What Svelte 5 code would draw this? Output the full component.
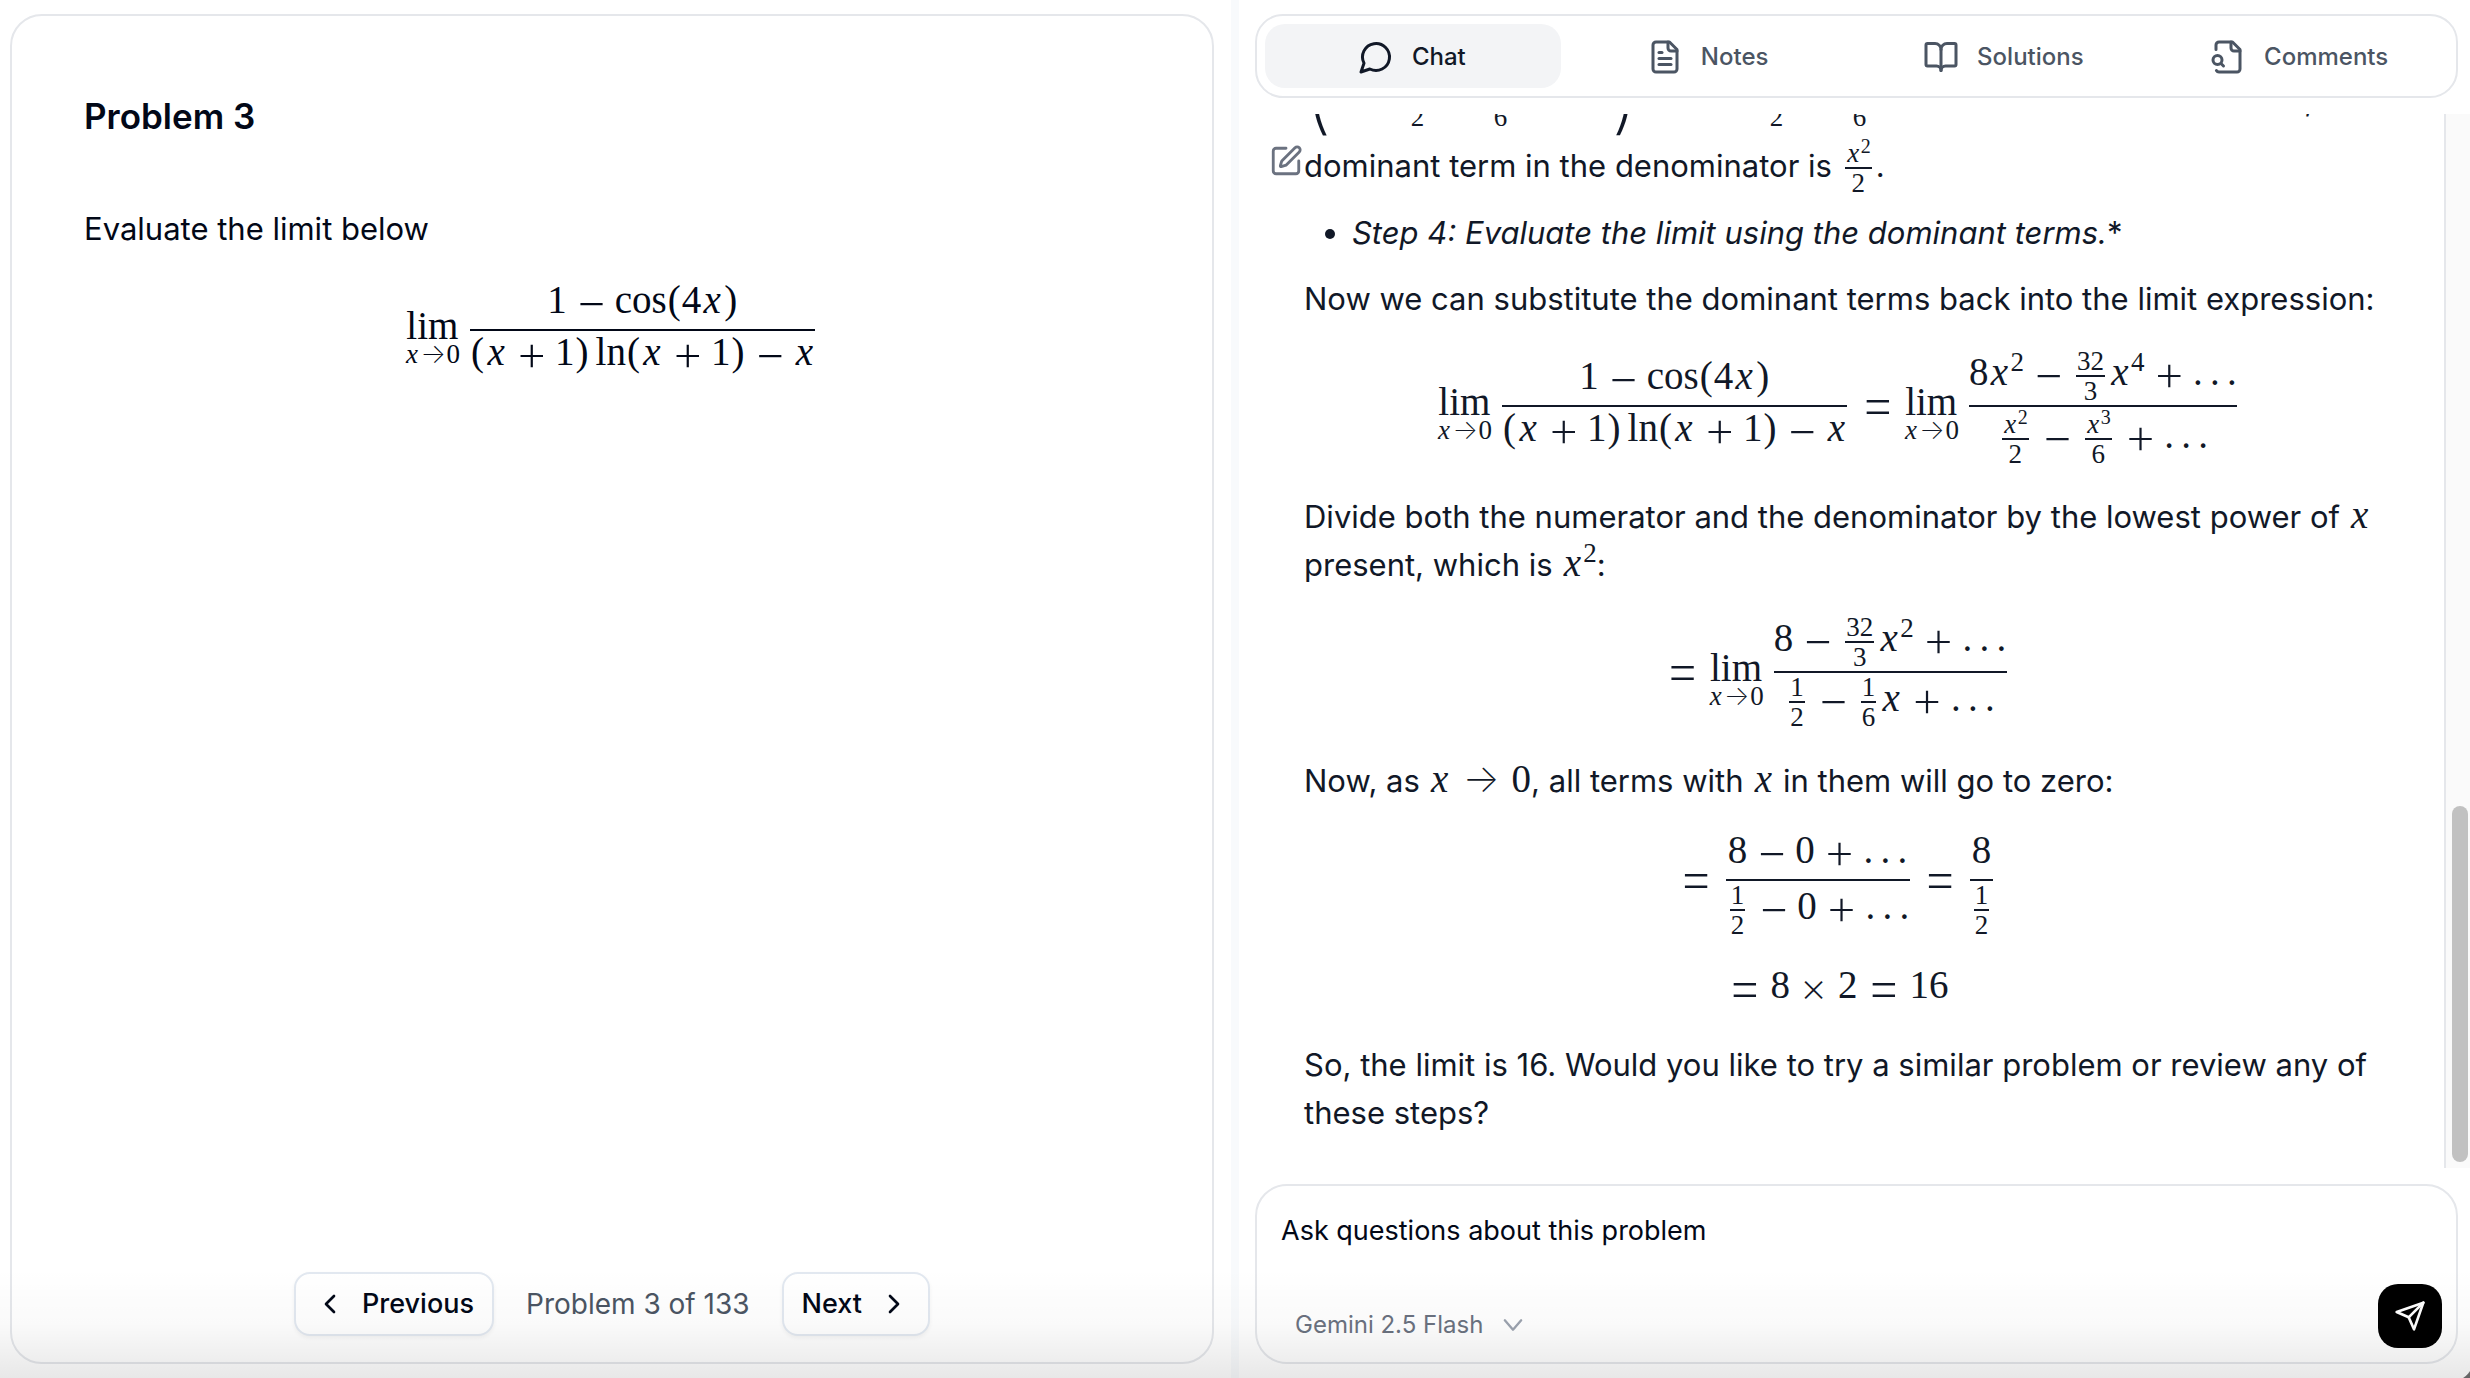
<script>
  const X2 = { exp: '2', base: 'x' };
  const half = { num: ['1'], den: ['2'], small: true };
  const sixth = { num: ['1'], den: ['6'], small: true };
  const thirtyTwoThirds = { num: ['32'], den: ['3'], small: true };
  const x2over2 = { num: [X2], den: ['2'], small: true };
  const x3over6 = { num: [{ base: 'x', exp: '3' }], den: ['6'], small: true };
  const original = {
    num: ['1', '−', 'cos', '(', '4', 'x', ')'],
    den: ['(', 'x', '+', '1', ')', 'thin', 'ln', '(', 'x', '+', '1', ')', '−', 'x'],
  };

  const problem = ['lim', original];
  const expansion = [
    'big(', 'x', '−', x2over2, '+', x3over6, '+', '…', 'big)', '−', 'x', '=',
    x2over2, '−', x3over6, '+', '…',
  ];
  const substituted = [
    'lim', original, '=', 'lim',
    {
      num: ['8', X2, '−', thirtyTwoThirds, { base: 'x', exp: '4' }, '+', '…'],
      den: [x2over2, '−', x3over6, '+', '…'],
      raised: true,
    },
  ];
  const divided = [
    '=', 'lim',
    {
      num: ['8', '−', thirtyTwoThirds, X2, '+', '…'],
      den: [half, '−', sixth, 'x', '+', '…'],
    },
  ];
  const evaluated = [
    '=', { num: ['8', '−', '0', '+', '…'], den: [half, '−', '0', '+', '…'] },
    '=', { num: ['8'], den: [half] },
  ];
  const result = ['=', '8', '×', '2', '=', '16'];

  const tabs = [
    { label: 'Chat', icon: ['M7.9 20A9 9 0 1 0 4 16.1L2 22Z'] },
    {
      label: 'Notes',
      icon: [
        'M15 2H6a2 2 0 0 0-2 2v16a2 2 0 0 0 2 2h12a2 2 0 0 0 2-2V7Z',
        'M14 2v4a2 2 0 0 0 2 2h4', 'M10 9H8', 'M16 13H8', 'M16 17H8',
      ],
    },
    {
      label: 'Solutions',
      icon: [
        'M12 7v14',
        'M3 18a1 1 0 0 1-1-1V4a1 1 0 0 1 1-1h5a4 4 0 0 1 4 4 4 4 0 0 1 4-4h5a1 1 0 0 1 1 1v13a1 1 0 0 1-1 1h-6a3 3 0 0 0-3 3 3 3 0 0 0-3-3z',
      ],
    },
    {
      label: 'Comments',
      icon: [
        'M14 2v4a2 2 0 0 0 2 2h4',
        'M4.268 21a2 2 0 0 0 1.727 1H18a2 2 0 0 0 2-2V7l-5-5H6a2 2 0 0 0-2 2v3',
        'm9 18-1.5-1.5', 'M8 14a3 3 0 1 1-6 0a3 3 0 0 1 6 0z',
      ],
    },
  ];
  let active = $state('Chat');
  let question = $state('');
</script>

{#snippet row(tokens)}
  {#each tokens as t}
    {#if t.num}
      <span class="frac" class:small={t.small} class:raised={t.raised}><span class="num">{@render row(t.num)}</span><span class="bar"></span><span class="den">{@render row(t.den)}</span></span>
    {:else if t.exp}
      <span class="var">{t.base}</span><span class="exp">{t.exp}</span>
    {:else if t === 'lim'}
      <span class="lim"><span>lim</span><span class="under"><span class="var">x</span><span class="arrow">→</span>0</span></span>
    {:else if t === 'x'}
      <span class="var">x</span>
    {:else if t === '→'}
      <span class="rel arrow">→</span>
    {:else if t === '='}
      <span class="rel op equals">=</span>
    {:else if t === '×'}
      <span class="bin op times">×</span>
    {:else if t === '+' || t === '−'}
      <span class="bin op">{t}</span>
    {:else if t === '…'}
      <span class="dots"><span>.</span><span>.</span><span>.</span></span>
    {:else if t === '(' || t === ')'}
      <span class="paren">{t}</span>
    {:else if t === 'big(' || t === 'big)'}
      <span class="bigparen">{t[3]}</span>
    {:else if t === 'thin'}
      <span class="thin"></span>
    {:else}
      <span>{t}</span>
    {/if}
  {/each}
{/snippet}

{#snippet math(tokens)}<span class="math">{@render row(tokens)}</span>{/snippet}

<div class="app">
  <main class="card problem">
    <h1>Problem 3</h1>
    <p class="statement">Evaluate the limit below</p>
    <div class="display">{@render math(problem)}</div>
    <nav class="pager" aria-label="Problems">
      <button type="button" class="page-btn prev">
        <svg viewBox="0 0 24 24" aria-hidden="true"><path d="m15 18-6-6 6-6" /></svg>
        Previous
      </button>
      <span>Problem 3 of 133</span>
      <button type="button" class="page-btn next">
        Next
        <svg viewBox="0 0 24 24" aria-hidden="true"><path d="m9 18 6-6-6-6" /></svg>
      </button>
    </nav>
  </main>

  <div class="divider"></div>

  <section class="side">
    <div class="tabs" role="tablist">
      {#each tabs as tab}
        <button type="button" role="tab" class="tab" class:active={active === tab.label}
          aria-selected={active === tab.label} onclick={() => (active = tab.label)}>
          <svg viewBox="0 0 24 24" aria-hidden="true">
            {#each tab.icon as d}<path {d} />{/each}
          </svg>
          {tab.label}
        </button>
      {/each}
    </div>

    <div class="chat">
      <div class="messages">
        <button type="button" class="edit" aria-label="Edit message">
          <svg viewBox="0 0 24 24" aria-hidden="true">
            <path d="M12 3H5a2 2 0 0 0-2 2v14a2 2 0 0 0 2 2h14a2 2 0 0 0 2-2v-7" />
            <path d="M18.375 2.625a1 1 0 0 1 3 3l-9.013 9.014a2 2 0 0 1-.853.505l-2.873.84a.5.5 0 0 1-.62-.62l.84-2.873a2 2 0 0 1 .506-.852z" />
          </svg>
        </button>
        <article>
          <p class="first">{@render math(expansion)}. When {@render math(['x'])} tends to zero, the</p>
          <p class="second">dominant term in the denominator is {@render math([x2over2])}.</p>
          <ul><li><em>Step 4: Evaluate the limit using the dominant terms.</em>*</li></ul>
          <p>Now we can substitute the dominant terms back into the limit expression:</p>
          <div class="display tall">{@render math(substituted)}</div>
          <p>Divide both the numerator and the denominator by the lowest power of {@render math(['x'])} present, which is {@render math([X2])}:</p>
          <div class="display">{@render math(divided)}</div>
          <p>Now, as {@render math(['x', '→', '0'])}, all terms with {@render math(['x'])} in them will go to zero:</p>
          <div class="display tight">{@render math(evaluated)}</div>
          <div class="display">{@render math(result)}</div>
          <p class="closing">So, the limit is 16. Would you like to try a similar problem or review any of these steps?</p>
        </article>
      </div>
      <div class="track"><div class="thumb"></div></div>
    </div>

    <form class="card composer" onsubmit={(e) => e.preventDefault()}>
      <textarea rows="1" aria-label="Question" placeholder="Ask questions about this problem" bind:value={question}></textarea>
      <div class="actions">
        <button type="button" class="model">
          Gemini 2.5 Flash
          <svg viewBox="0 0 24 24" aria-hidden="true"><path d="m5 8 7 8 7-8" /></svg>
        </button>
        <button type="submit" class="send" aria-label="Send">
          <svg viewBox="0 0 24 24" aria-hidden="true"><path d="M22 2 15 22 11 13 2 9Z" /><path d="M22 2 11 13" /></svg>
        </button>
      </div>
    </form>
  </section>
  <div class="shade"></div>
</div>

<style>
  :global(body) { margin: 0; background: #fff; }
  * { box-sizing: border-box; }
  .app {
    position: relative;
    display: grid;
    grid-template: minmax(0, 1fr) / minmax(0, 1fr) 8px minmax(0, 1fr);
    height: 100vh;
    overflow: hidden;
    font-family: Inter, 'Liberation Sans', sans-serif;
    font-size: 31px;
    line-height: 48px;
    color: #020817;
  }
  button, textarea { font: inherit; color: inherit; }
  button { cursor: pointer; }
  svg { flex: none; fill: none; stroke: currentColor; stroke-width: 2; stroke-linecap: round; stroke-linejoin: round; }
  .card { border: 2px solid #e5e7eb; border-radius: 32px; background: #fff; }

  .problem {
    display: flex;
    flex-direction: column;
    margin: 14px 17px 14px 10px;
    padding: 76px 72px 26px;
  }
  h1 { margin: 0; font-size: 35px; line-height: 48px; font-weight: 600; }
  .statement { margin: 65px 0 18px; }
  .problem .display { margin: 0; }
  .pager {
    display: flex;
    justify-content: center;
    align-items: center;
    gap: 32px;
    margin-top: auto;
    font-size: 28px;
    color: #4b5563;
  }
  .page-btn {
    display: flex;
    align-items: center;
    gap: 16px;
    height: 64px;
    padding: 0 18px;
    border: 2px solid #e2e8f0;
    border-radius: 16px;
    background: #fff;
    color: #020817;
    font-size: 27px;
    font-weight: 500;
    box-shadow: 0 2px 4px rgb(0 0 0 / 5%);
  }
  .page-btn svg { width: 32px; height: 32px; }

  .divider { background: #f8fafc; }

  .side { display: flex; flex-direction: column; min-width: 0; padding: 14px 0; }
  .tabs {
    display: grid;
    grid-template-columns: repeat(4, 1fr);
    margin: 0 12px 16px 16px;
    padding: 8px;
    border: 2px solid #e5e7eb;
    border-radius: 28px;
  }
  .tab {
    display: flex;
    justify-content: center;
    align-items: center;
    gap: 18px;
    height: 64px;
    padding: 2px 6px 0 4px;
    border: 0;
    border-radius: 20px;
    background: none;
    color: #4b5563;
    font-size: 24px;
    font-weight: 500;
  }
  .tab.active { background: #f3f4f6; color: #111827; }
  .tab svg { width: 36px; height: 36px; }

  .chat { display: flex; flex: 1; min-height: 0; }
  .messages {
    position: relative;
    display: flex;
    flex: 1;
    flex-direction: column;
    justify-content: flex-end;
    overflow: hidden;
    min-width: 0;
    padding: 0 60px 31px 65px;
    color: #111827;
  }
  article p { margin: 0; }
  article .first { white-space: nowrap; }
  article .second { margin-top: 8px; }
  article .closing { margin-top: 32px; }
  ul { margin: 12px 0 18px; padding-left: 48px; }
  .edit {
    position: absolute;
    top: 30px;
    left: 30px;
    padding: 0;
    border: 0;
    background: none;
    color: #6b7280;
    line-height: 0;
  }
  .edit svg { width: 34px; height: 34px; }
  .track {
    width: 26px;
    padding: 0 2px 6px 6px;
    border-left: 2px solid #e5e7eb;
    background: #fafafa;
    display: flex;
    flex-direction: column;
    justify-content: flex-end;
  }
  .thumb { height: 34%; border-radius: 8px; background: #c1c1c1; }

  .composer { display: flex; flex-direction: column; margin: 16px 12px 0 16px; height: 180px; padding: 23px 14px 14px; }
  textarea {
    width: 100%;
    height: 44px;
    padding: 0 10px;
    border: 0;
    outline: 0;
    resize: none;
    overflow: hidden;
    background: none;
    font-size: 27px;
    line-height: 44px;
  }
  textarea::placeholder { color: #020817; opacity: 1; }
  .actions { display: flex; justify-content: space-between; align-items: flex-end; margin-top: auto; }
  .model {
    display: flex;
    align-items: center;
    gap: 16px;
    padding: 0 24px;
    border: 0;
    background: none;
    color: #6b7280;
    font-size: 24px;
    line-height: 46px;
  }
  .model svg { width: 28px; height: 28px; color: #9ca3af; }
  .send {
    display: grid;
    place-items: center;
    width: 64px;
    height: 64px;
    padding: 0;
    border: 0;
    border-radius: 20px;
    background: #000;
    color: #fff;
  }
  .send svg { width: 32px; height: 32px; }

  .shade {
    position: absolute;
    inset: auto 0 0;
    height: 110px;
    pointer-events: none;
    background: linear-gradient(to bottom, rgb(0 0 0 / 0%), rgb(0 0 0 / 2%) 50%, rgb(0 0 0 / 9%));
  }
  /* Rounded window corner */
  .shade::after {
    content: '';
    position: absolute;
    right: 0;
    bottom: 0;
    width: 24px;
    height: 24px;
    background: radial-gradient(circle at 0 0, transparent 29px, #666 30px);
  }

  /* Typeset formulas */
  .display { display: flex; justify-content: center; margin: 20px 0 22px; }
  article .display { margin-right: 10px; }
  article .tall { margin-bottom: 24px; }
  article .tight { margin-top: 16px; }
  .math { font-family: 'Liberation Serif', 'Times New Roman', serif; font-size: 39px; white-space: nowrap; }
  .math span { display: inline-block; }
  .display .math { line-height: 48px; }
  article p .math { line-height: 0; }
  .math .var { width: 22px; font-style: italic; text-align: center; }
  .math .exp { font-size: 27px; line-height: 0; vertical-align: 14px; }
  .math .paren { width: 15px; text-align: center; }
  .math .bigparen { width: 26px; font-family: Inter, sans-serif; font-weight: 200; font-size: 84px; line-height: 0; vertical-align: -13px; }
  .math .op { width: 30px; font-family: Inter, sans-serif; font-weight: 200; font-size: 52px; line-height: 0; text-align: center; text-indent: -1px; vertical-align: -6px; }
  .math .equals { font-size: 60px; text-indent: -4px; vertical-align: -9px; }
  .math .times { font-size: 42px; vertical-align: -4px; }
  .math .bin { margin: 0 9px; }
  .math .rel { margin: 0 11px; }
  .math > .equals:first-child { margin-left: 0; }
  .math .arrow { width: 39px; font-family: Inter, sans-serif; font-weight: 200; line-height: 0; text-align: center; }
  .math .dots { display: inline-flex; gap: 6px; }
  .math .dots span { width: 11px; text-align: center; }
  .math .thin { width: 6px; }
  .math .frac { display: inline-grid; grid-template-rows: 1fr 2px 1fr; margin: 0 4px; vertical-align: middle; text-align: center; }
  .math .num { align-self: end; line-height: 58px; }
  .math .den { line-height: 42px; }
  .math .raised > .den { padding-top: 3px; }
  .math .bar { background: currentColor; }
  .math .small { font-size: 27px; }
  .math .small .num, .math .small .den { line-height: 28px; padding: 0 1px; }
  .math .small .var { width: 15px; }
  .math .small .exp { font-size: 20px; vertical-align: 9px; }
  .math .lim { display: inline-flex; flex-direction: column; align-items: center; margin-right: 6px; line-height: 32px; }
  .math .under { font-size: 27px; line-height: 24px; }
  .math .under .var { width: 15px; }
  .math .under .arrow { width: 27px; }
</style>
